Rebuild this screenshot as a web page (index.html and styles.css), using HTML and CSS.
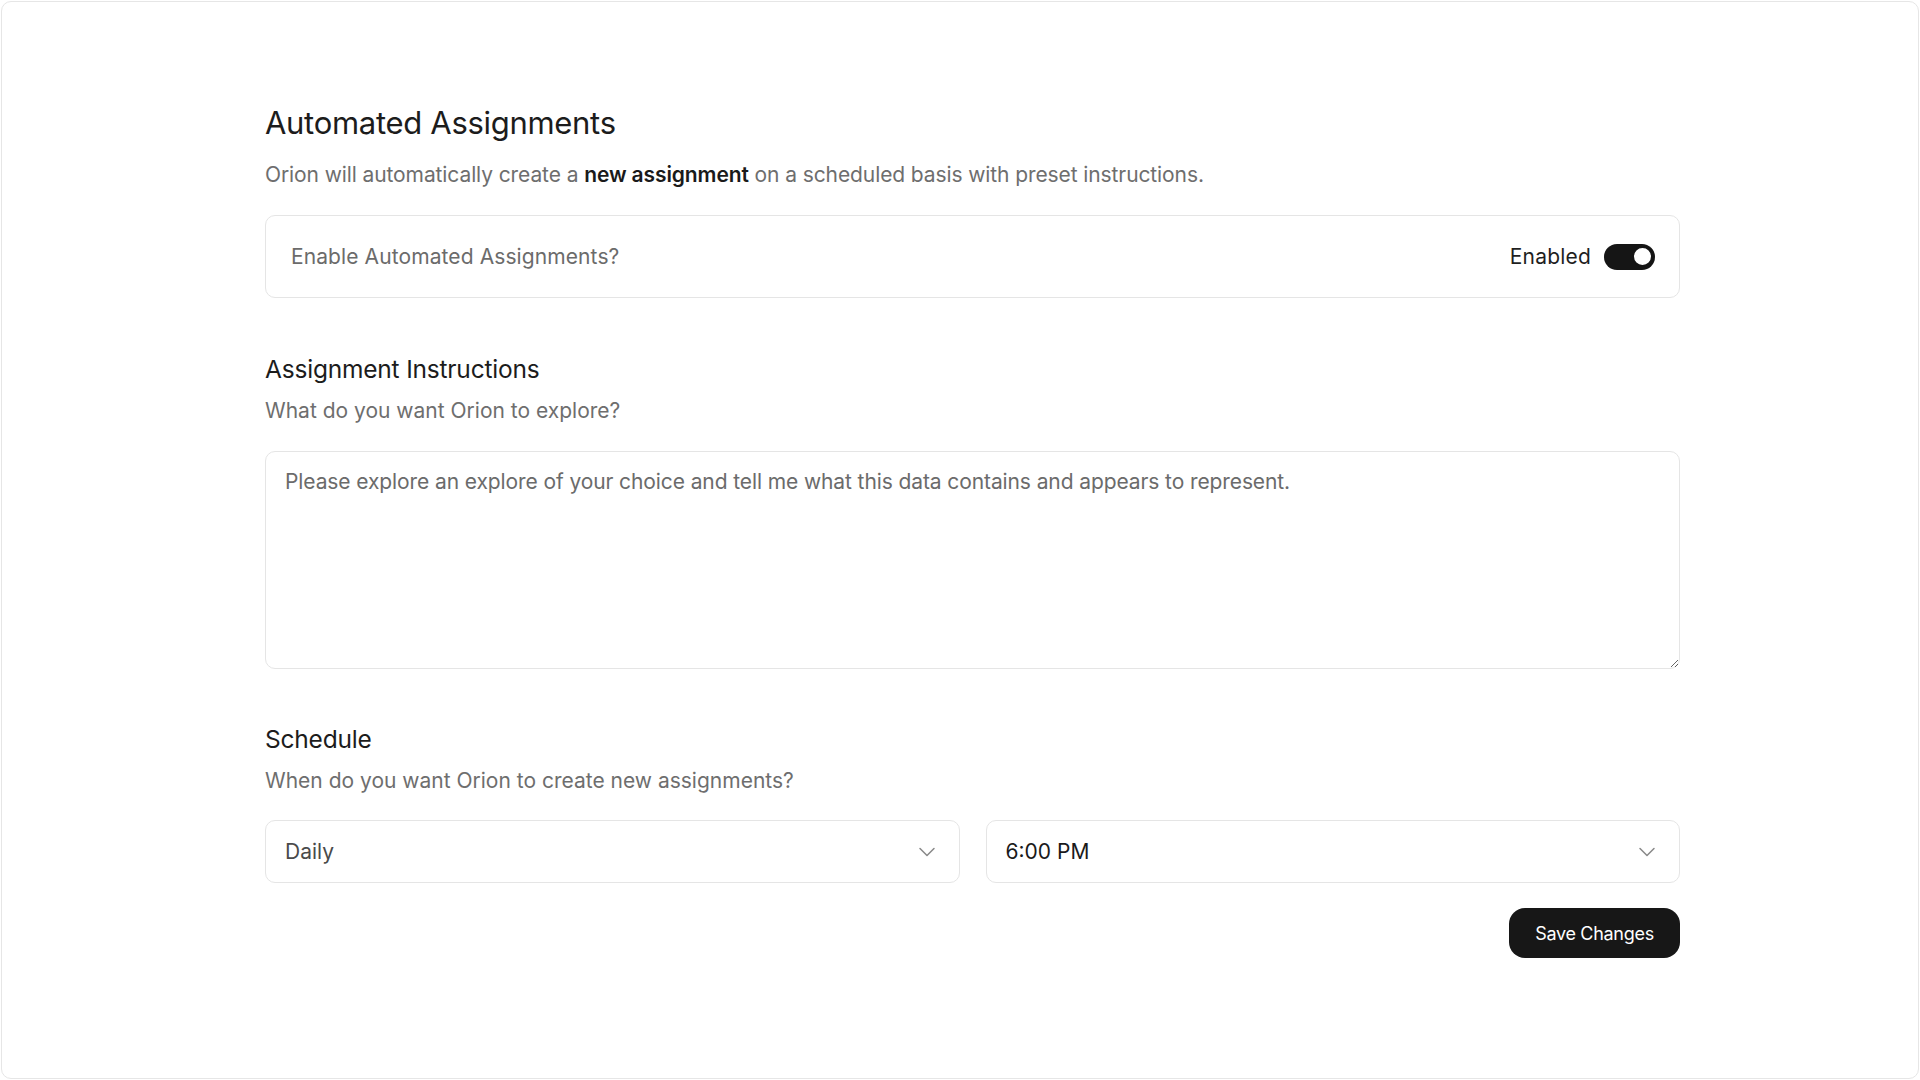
FILE: index.html
```html
<!DOCTYPE html>
<html lang="en">
<head>
<meta charset="utf-8">
<title>Automated Assignments</title>
<link rel="stylesheet" href="styles.css">
</head>
<body>
<div class="frame">
  <main class="content">
    <h1 class="title">Automated Assignments</h1>
    <p class="lead">Orion will automatically create a <strong>new assignment</strong> on a scheduled basis with preset instructions.</p>

    <div class="toggle-card">
      <span class="toggle-label">Enable Automated Assignments?</span>
      <div class="toggle-right">
        <span class="toggle-state">Enabled</span>
        <span class="switch"><span class="knob"></span></span>
      </div>
    </div>

    <h2 class="section-title first">Assignment Instructions</h2>
    <p class="section-sub">What do you want Orion to explore?</p>
    <textarea class="instructions">Please explore an explore of your choice and tell me what this data contains and appears to represent.</textarea>

    <h2 class="section-title">Schedule</h2>
    <p class="section-sub">When do you want Orion to create new assignments?</p>
    <div class="selects">
      <div class="select">
        <span class="select-value muted">Daily</span>
        <svg class="chevron" width="28" height="28" viewBox="0 0 24 24" fill="none" stroke="currentColor" stroke-width="1.3" stroke-linecap="round" stroke-linejoin="round"><path d="M6 9l6 6 6-6"/></svg>
      </div>
      <div class="select">
        <span class="select-value">6:00 PM</span>
        <svg class="chevron" width="28" height="28" viewBox="0 0 24 24" fill="none" stroke="currentColor" stroke-width="1.3" stroke-linecap="round" stroke-linejoin="round"><path d="M6 9l6 6 6-6"/></svg>
      </div>
    </div>
    <div class="actions">
      <button class="save">Save Changes</button>
    </div>
  </main>
</div>
</body>
</html>
```
FILE: styles.css
```css
* { box-sizing: border-box; }
html, body { margin: 0; padding: 0; background: #ffffff; }
body {
  padding: 1px;
  font-family: Inter, "Noto Sans", "Liberation Sans", sans-serif;
  color: #1a1a1a;
}
.frame {
  height: 1078px;
  border: 1px solid #e6e6e6;
  border-radius: 10px;
  background: #ffffff;
}
.content {
  width: 1415px;
  margin-left: 263px;
  padding-top: 103px;
}
.title {
  margin: 0;
  font-size: 31px;
  line-height: 36px;
  font-weight: 400;
  letter-spacing: -0.3px;
  color: #1c1c1c;
}
.lead {
  margin: 20px 0 0;
  font-size: 21px;
  line-height: 28px;
  color: #6e6e6e;
  letter-spacing: -0.1px;
}
.lead strong { font-weight: 600; color: #1a1a1a; }
.toggle-card {
  margin-top: 26px;
  height: 83px;
  border: 1px solid #e5e5e5;
  border-radius: 10px;
  display: flex;
  align-items: center;
  justify-content: space-between;
  padding: 0 24px 0 25px;
}
.toggle-label {
  font-size: 21px;
  color: #6b6b6b;
  letter-spacing: 0.1px;
}
.toggle-right { display: flex; align-items: center; gap: 13px; }
.toggle-state { font-size: 21px; color: #1f1f1f; letter-spacing: 0.2px; }
.switch {
  width: 51px;
  height: 26px;
  border-radius: 13px;
  background: #151515;
  display: flex;
  align-items: center;
  justify-content: flex-end;
  padding-right: 2px;
}
.knob {
  width: 21px;
  height: 21px;
  border-radius: 50%;
  background: #ffffff;
  border: 2px solid #151515;
}
.section-title {
  margin: 54px 0 0;
  font-size: 24.5px;
  line-height: 32px;
  font-weight: 400;
  letter-spacing: -0.2px;
  color: #1c1c1c;
}
.section-title.first { margin-top: 55px; }
.section-sub {
  margin: 12px 0 0;
  font-size: 21px;
  line-height: 28px;
  color: #6e6e6e;
  letter-spacing: 0;
}
.instructions {
  display: block;
  margin-top: 26px;
  width: 100%;
  height: 218px;
  border: 1px solid #e5e5e5;
  border-radius: 10px;
  padding: 16px 19px;
  font-family: inherit;
  font-size: 21px;
  line-height: 28px;
  color: #6b6b6b;
  letter-spacing: -0.1px;
  resize: vertical;
  outline: none;
  background: #fff;
}
.selects {
  margin-top: 25px;
  display: grid;
  grid-template-columns: 1fr 1fr;
  gap: 26px;
}
.select {
  height: 63px;
  border: 1px solid #e5e5e5;
  border-radius: 10px;
  display: flex;
  align-items: center;
  justify-content: space-between;
  padding: 0 18px 0 19px;
}
.select-value { font-size: 21px; color: #1a1a1a; letter-spacing: 0; }
.select-value.muted { color: #4a4a4a; }
.chevron { color: #8a8a8a; }
.actions {
  margin-top: 25px;
  display: flex;
  justify-content: flex-end;
}
.save {
  width: 171px;
  height: 50px;
  border: none;
  border-radius: 16px;
  background: #171717;
  color: #ffffff;
  font-family: inherit;
  font-size: 18px;
  letter-spacing: -0.3px;
  cursor: pointer;
}
```
